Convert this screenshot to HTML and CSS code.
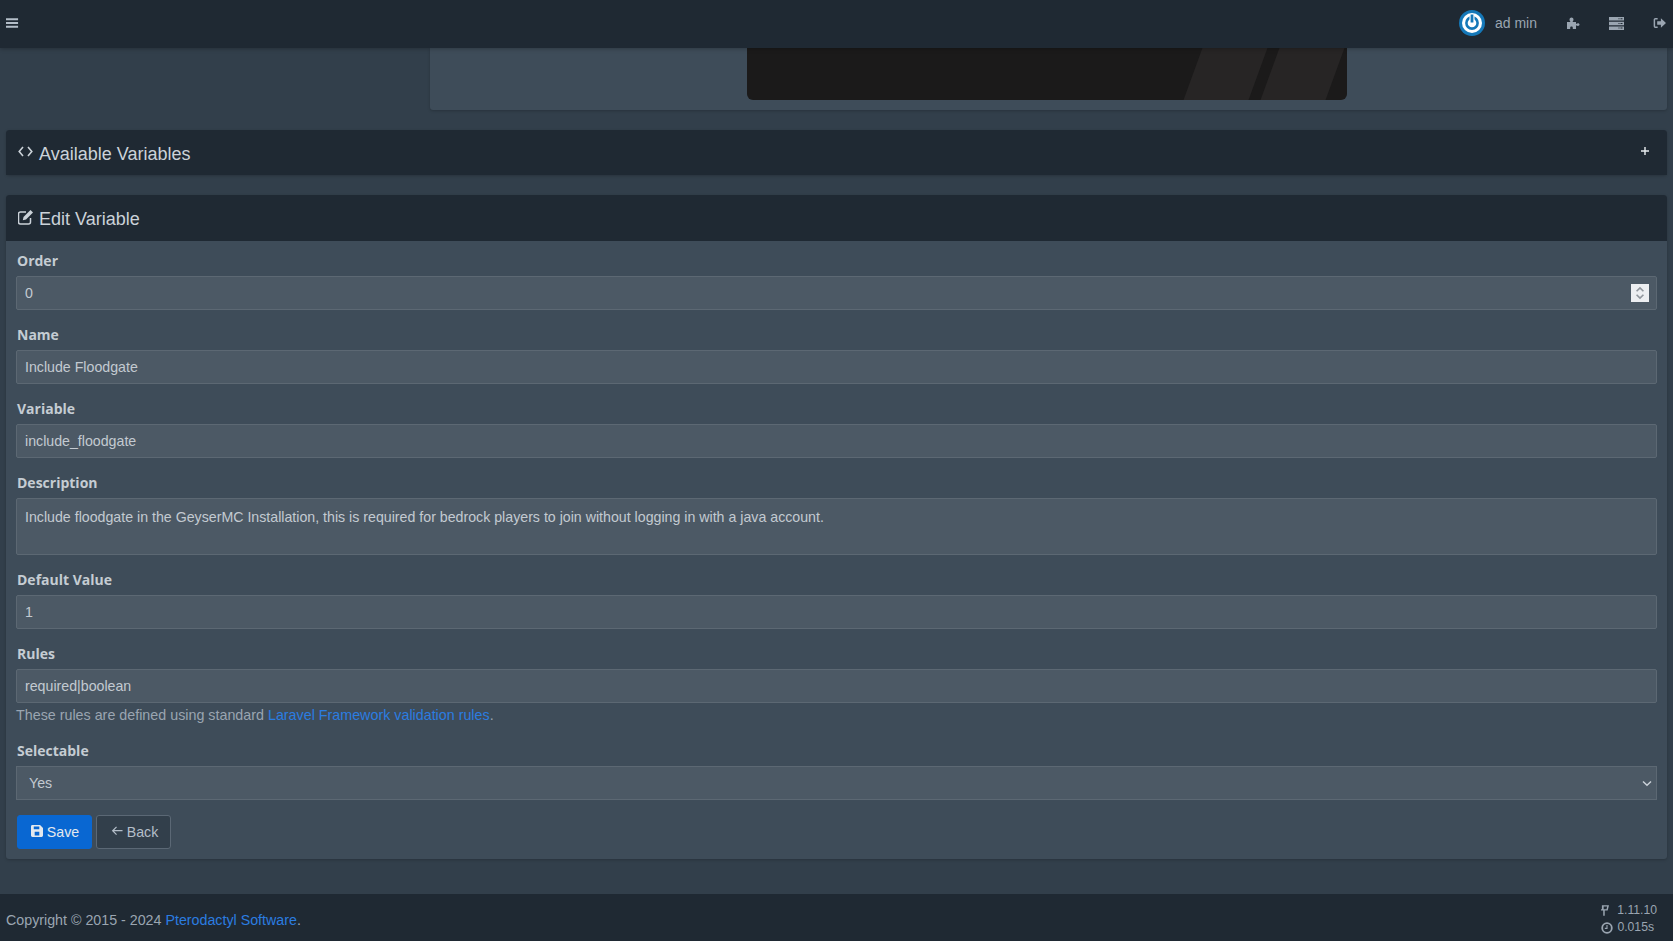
FILE: index.html
```
<!DOCTYPE html>
<html lang="en">
<head>
<meta charset="utf-8">
<title>Edit Variable</title>
<link rel="stylesheet" href="styles.css">
</head>
<body>
<header class="navbar">
  <svg class="icon burger" viewBox="0 0 14 12"><path d="M0 1h13v2H0zM0 5h13v2H0zM0 9h13v2H0z"/></svg>
  <div class="nav-right">
    <svg class="avatar" viewBox="0 0 26 26"><circle cx="13" cy="13" r="13" fill="#1578b8"/><circle cx="13" cy="13" r="10" fill="#fff"/><circle cx="13" cy="13" r="5.6" fill="none" stroke="#1578b8" stroke-width="2.6"/><path d="M10.5 4h5v7h-5z" fill="#fff"/><path d="M13 4.5v8" stroke="#1578b8" stroke-width="2.8"/></svg>
    <span class="user">ad min</span>
    <svg class="icon nav-puzzle" viewBox="0 0 14 14"><path d="M1 13V6h3.500C3.800 5 3.500 4.400 3.500 3.500 3.500 2.300 4.500 1.500 5.500 1.500S7.500 2.300 7.500 3.500C7.500 4.400 7.200 5 6.500 6H10V8c.8-.6 1.300-.8 2-.8.900 0 1.500.6 1.500 1.400S12.900 10 12 10c-.7 0-1.200-.2-2-.8V13H6.800V11.800C6.800 11 6.300 10.500 5.500 10.500S4.200 11 4.200 11.800V13z"/></svg>
    <svg class="icon nav-server" viewBox="0 0 15 13"><path d="M0 0h15v3.500H0zM0 4.700h15v3.500H0zM0 9.400h15v3.500H0z"/><path d="M9.500 1.200h1v1h-1zM11.500 1.200h2v1h-2zM9.500 5.900h1v1h-1zM11.500 5.900h2v1h-2zM9.500 10.600h1v1h-1zM11.500 10.600h2v1h-2z" fill="#1f2933"/></svg>
    <svg class="icon nav-out" viewBox="0 0 14 12"><path d="M5 1.500H2.500A1 1 0 0 0 1.500 2.500v7a1 1 0 0 0 1 1H5" fill="none" stroke="currentColor" stroke-width="1.600"/><path d="M8.500 1 14 6l-5.500 5V8H4.500V4h4z"/></svg>
  </div>
</header>

<main class="content">
  <section class="preview-row">
    <div class="preview">
      <div class="preview-image">
        <span class="stripe stripe-a"></span>
        <span class="stripe stripe-b"></span>
      </div>
    </div>
  </section>

  <section class="card">
    <div class="card-head">
      <h3 class="card-title">
        <svg class="icon title-icon" viewBox="0 0 15 15"><path d="M5 3 1.200 7.500 5 12M10 3l3.800 4.500L10 12" fill="none" stroke="currentColor" stroke-width="1.600"/></svg>
        Available Variables
      </h3>
      <svg class="icon plus" viewBox="0 0 9 9"><path d="M3.700 0h1.600v3.700H9v1.600H5.300V9H3.700V5.300H0V3.700h3.700z"/></svg>
    </div>
  </section>

  <section class="card">
    <div class="card-head">
      <h3 class="card-title">
        <svg class="icon title-icon" viewBox="0 0 15 15"><path d="M12.500 8v4a2 2 0 0 1-2 2h-8a2 2 0 0 1-2-2V4a2 2 0 0 1 2-2H8" fill="none" stroke="currentColor" stroke-width="1.500"/><path d="M12.500 0 15 2.500 8 9.500 4.800 10.200 5.500 7z"/></svg>
        Edit Variable
      </h3>
    </div>
    <form class="card-body">
      <div class="field">
        <label class="label">Order</label>
        <div class="input-wrap">
          <input class="control" type="text" value="0">
          <span class="spinner">
            <svg viewBox="0 0 10 14"><path d="M2 5.500 5 2.500l3 3M2 8.500l3 3 3-3" fill="none" stroke="#8f959c" stroke-width="1.400"/></svg>
          </span>
        </div>
      </div>
      <div class="field">
        <label class="label">Name</label>
        <input class="control" type="text" value="Include Floodgate">
      </div>
      <div class="field">
        <label class="label">Variable</label>
        <input class="control" type="text" value="include_floodgate">
      </div>
      <div class="field">
        <label class="label">Description</label>
        <textarea class="control textarea">Include floodgate in the GeyserMC Installation, this is required for bedrock players to join without logging in with a java account.</textarea>
      </div>
      <div class="field">
        <label class="label">Default Value</label>
        <input class="control" type="text" value="1">
      </div>
      <div class="field">
        <label class="label">Rules</label>
        <input class="control" type="text" value="required|boolean">
        <p class="help">These rules are defined using standard <a class="link" href="#">Laravel Framework validation rules</a>.</p>
      </div>
      <div class="field">
        <label class="label label-select">Selectable</label>
        <div class="input-wrap">
          <select class="control select"><option>Yes</option></select>
          <svg class="chevron" viewBox="0 0 10 7"><path d="M1 1.500 5 5.200l4-3.700" fill="none" stroke="currentColor" stroke-width="1.500"/></svg>
        </div>
      </div>
      <div class="actions">
        <button class="btn btn-primary" type="button">
          <svg class="icon btn-icon" viewBox="0 0 13 13"><path fill-rule="evenodd" d="M1.500 0h8.300L13 3.200v8.300a1.500 1.500 0 0 1-1.500 1.500h-10A1.500 1.500 0 0 1 0 11.500v-10A1.500 1.500 0 0 1 1.500 0zM3 1.500v3h6v-3zM4 7.200v4.300h5V7.200z"/></svg>
          Save
        </button>
        <button class="btn btn-back" type="button">
          <svg class="icon btn-icon" viewBox="0 0 13 13"><path d="M6 2 1.800 6.200 6 10.400M2 6.200h10.500" fill="none" stroke="currentColor" stroke-width="1.300"/></svg>
          Back
        </button>
      </div>
    </form>
  </section>
</main>

<footer class="footer">
  <p class="copyright">Copyright © 2015 - 2024 <a class="link" href="#">Pterodactyl Software</a>.</p>
  <div class="meta">
    <div class="meta-row">
      <svg class="icon meta-flag" viewBox="0 0 9 12"><path d="M1 0h8L7.500 6H4.200v6H2.500V6H0V4.500h1zM3 1.500v3h3.200l.7-3z" fill-rule="evenodd"/></svg>
      <span class="meta-version">1.11.10</span>
    </div>
    <div class="meta-row">
      <svg class="meta-clock" viewBox="0 0 12 12"><circle cx="6" cy="6" r="4.800" fill="none" stroke="currentColor" stroke-width="1.800"/><path d="M6 3v3.400H3.800" fill="none" stroke="currentColor" stroke-width="1.100"/></svg>
      <span class="meta-time">0.015s</span>
    </div>
  </div>
</footer>
</body>
</html>
```
FILE: styles.css
```
* { box-sizing: border-box; }
html, body { margin: 0; height: 100%; }
body {
  width: 1673px;
  height: 941px;
  overflow: hidden;
  display: flex;
  flex-direction: column;
  background: #323f4b;
  color: #cbd2d9;
  font-family: "Liberation Sans", Arial, sans-serif;
  font-size: 14.2px;
}
.icon { fill: currentColor; display: block; flex: none; }

.navbar {
  position: relative;
  z-index: 2;
  height: 48px;
  flex: none;
  display: flex;
  align-items: center;
  justify-content: space-between;
  padding: 0 7px 2px 6px;
  background: #1f2933;
  box-shadow: 0 1px 4px rgba(0, 0, 0, .25);
  color: #9aa5b1;
}
.burger { width: 13px; height: 12px; color: #b4bec9; }
.nav-right { display: flex; align-items: center; }
.avatar { width: 26px; height: 26px; display: block; }
.user { margin-left: 10px; width: 71px; color: #9aa5b1; font-size: 14px; }
.nav-puzzle { width: 14px; height: 14px; }
.nav-server { width: 15px; height: 13px; margin-left: 29px; }
.nav-out { width: 13px; height: 12px; margin-left: 29px; }

.content {
  flex: 1;
  padding: 0 6px;
  display: flex;
  flex-direction: column;
  min-height: 0;
}
.preview-row { display: flex; justify-content: flex-end; margin-bottom: 20px; }
.preview {
  width: 1237px;
  height: 62px;
  display: flex;
  justify-content: center;
  background: #3e4c59;
  border-radius: 0 0 3px 3px;
  box-shadow: 0 1px 3px rgba(0, 0, 0, .2);
}
.preview-image {
  position: relative;
  width: 600px;
  height: 52px;
  margin-right: 3px;
  overflow: hidden;
  background: #1b1a1a;
  border-radius: 0 0 6px 6px;
}
.stripe {
  position: absolute;
  top: 0;
  width: 65px;
  height: 52px;
  background: #272525;
  transform: skewX(-20deg);
}
.stripe-a { left: 446px; }
.stripe-b { left: 523px; }

.card {
  margin-bottom: 20px;
  background: #3e4c59;
  border-radius: 3px;
  box-shadow: 0 1px 3px rgba(0, 0, 0, .2);
}
.card-head {
  height: 45px;
  display: flex;
  align-items: center;
  justify-content: space-between;
  padding: 0 18px 0 12px;
  background: #1f2933;
  border-radius: 3px 3px 0 0;
}
.card + .card .card-head { height: 46px; }
.card-title {
  margin: 0;
  padding-top: 2px;
  display: flex;
  align-items: center;
  font-size: 18px;
  font-weight: 400;
  line-height: 20px;
  color: #cbd2d9;
}
.title-icon { width: 15px; height: 15px; margin: -4px 6px 0 0; }
.plus { width: 8px; height: 8px; color: #e8ecef; margin-top: -3px; }

.card-body { padding: 11px 10px 10px 10px; }
.field { margin-bottom: 16px; }
.label {
  display: block;
  height: 24px;
  padding-left: 1px;
  font-family: "Open Sans", sans-serif;
  font-size: 14px;
  font-weight: 700;
  line-height: 18px;
  color: #c5ccd3;
}
.input-wrap { position: relative; }
.control {
  display: block;
  width: 100%;
  height: 34px;
  padding: 0 8px;
  margin: 0;
  border: 1px solid #5c6873;
  border-radius: 2px;
  outline: 0;
  background: #4c5965;
  color: #c3cad1;
  font-family: "Liberation Sans", Arial, sans-serif;
  font-size: 14.2px;
}
.textarea {
  height: 57px;
  padding-top: 10px;
  resize: none;
  line-height: 17px;
}
.select {
  padding-left: 12px;
  appearance: none;
  -webkit-appearance: none;
  border-radius: 0;
}
.spinner {
  position: absolute;
  top: 8px;
  right: 8px;
  width: 18px;
  height: 18px;
  display: flex;
  align-items: center;
  justify-content: center;
  background: #eceef1;
}
.spinner svg { width: 12px; height: 16px; display: block; }
.chevron {
  position: absolute;
  top: 14px;
  right: 5px;
  width: 10px;
  height: 7px;
  color: #cbd2d9;
}
.help {
  margin: 2px 0 0;
  height: 21px;
  font-size: 14.3px;
  line-height: 20px;
  color: #9aa5b1;
}
.link { color: #2b7de1; text-decoration: none; }

.actions { display: flex; gap: 4px; margin-top: -1px; padding-left: 1px; }
.btn {
  height: 34px;
  display: flex;
  align-items: center;
  justify-content: center;
  margin: 0;
  padding: 0;
  border-radius: 3px;
  font-family: "Liberation Sans", Arial, sans-serif;
  font-size: 14.2px;
}
.btn-icon { width: 12px; height: 12px; margin: -3px 4px 0 0; }
.btn-primary { width: 75px; padding-left: 1px; border: 1px solid #0967d2; background: #0967d2; color: #e4e9ee; }
.btn-back { width: 75px; padding-left: 2px; border: 1px solid #5b6875; background: #323f4b; color: #b4bec9; }

.footer {
  height: 47px;
  flex: none;
  display: flex;
  align-items: center;
  justify-content: space-between;
  padding: 0 16px 0 6px;
  background: #1f2933;
  color: #9aa5b1;
}
.copyright { margin: 5px 0 0; font-size: 14.25px; }
.meta { font-size: 12.2px; line-height: 17px; padding-top: 3px; }
.meta-row { display: flex; align-items: center; justify-content: flex-end; }
.meta-row:last-child { padding-right: 3px; }
.meta-flag { width: 8px; height: 11px; margin-right: 8px; }
.meta-clock { width: 12px; height: 12px; margin-right: 4px; display: block; }
```
